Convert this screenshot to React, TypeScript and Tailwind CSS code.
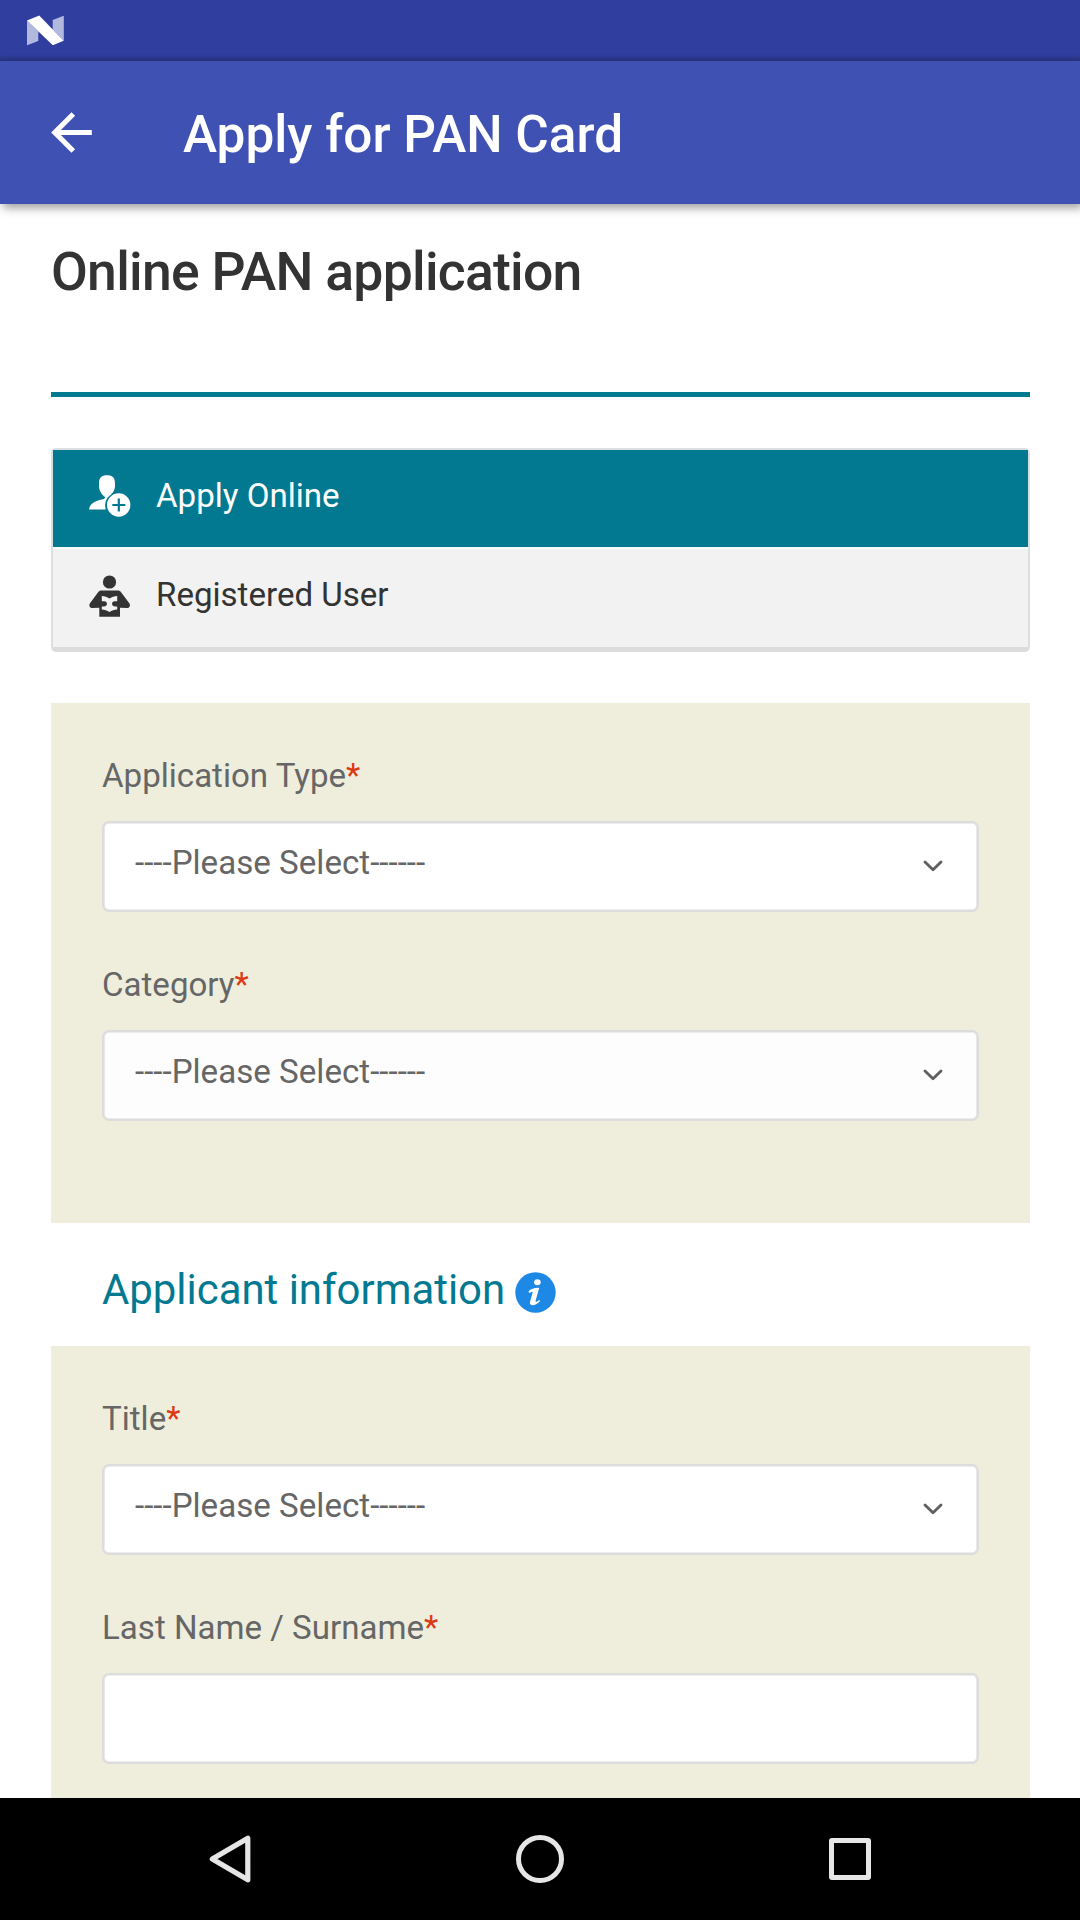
import React from "react";

function AndroidN() {
  return (
    <svg className="ml-[27px] mt-[15px] h-[31px] w-[37px] shrink-0" viewBox="0 0 37 31">
      <path d="M0 5.6 11.3 16.5V26L0 30.2Z" fill="#b3b8df" />
      <path d="M25.7 5 36.8 0.8V26L25.7 14.5Z" fill="#b3b8df" />
      <path d="M0 5.6 12.2 0.6 36.6 25.8 25.8 30.2Z" fill="#fff" />
    </svg>
  );
}

function StatusBar() {
  return (
    <div className="flex h-[61px] shrink-0 bg-linear-to-b from-[#303e9f] from-90% to-[#283480]">
      <AndroidN />
    </div>
  );
}

function AppBar() {
  return (
    <header className="relative z-10 flex h-[143px] shrink-0 items-center bg-[#3f51b3] pl-[41px] shadow-[3px_4px_9px_rgba(0,0,0,0.38)]">
      <svg className="h-[61px] w-[61px] shrink-0" viewBox="0 0 24 24" fill="#fff">
        <path d="M20 11H7.83l5.59-5.59L12 4l-8 8 8 8 1.41-1.41L7.83 13H20v-2z" />
      </svg>
      <h1 className="mt-[5px] ml-[81px] text-[51.3px] leading-[60px] font-medium text-white">
        Apply for PAN Card
      </h1>
    </header>
  );
}

function AddUserIcon() {
  return (
    <svg className="h-[42px] w-[42px]" viewBox="0 0 42 42" fill="#fff">
      <path d="M10 8.5C10 2.5 12.5.2 18 .2S26 2.5 26 8.5V11c0 3.5-1.6 6.5-4 8.6a14.2 14.2 0 0 0-5.4 14.9H.2c0-5 4.8-9 14.8-10.6l1.4-1.7C12.5 19.5 10 15.5 10 11Z" />
      <path
        fillRule="evenodd"
        d="M29.7 18.3a11.7 11.7 0 1 1 0 23.4 11.7 11.7 0 0 1 0-23.4ZM28.7 23.5v5.4h-5.4v2.2h5.4v5.4h2.2v-5.4h5.4v-2.2h-5.4v-5.4Z"
      />
    </svg>
  );
}

function ReaderIcon() {
  return (
    <svg className="h-[42px] w-[42px]" viewBox="0 0 42 42" fill="#333">
      <circle cx="20.5" cy="7" r="6.6" />
      <path
        fillRule="evenodd"
        d="M12.3 15.5h16.6c1.2 0 2.2.5 3 1.5l8.6 11.5c1 2 .3 4.3-2 4.500l-7.500-.2V41.700H10.300V32.800l-7.500.2C.5 32.800-.2 30.500.8 28.500L9.300 17c.8-1 1.800-1.500 3-1.500ZM12.800 21v5.300h2.600c3.400.2 3.400 4.900 0 5.200h-2.600V34.500c3 .2 5.200 1 7.700 2.500 2.500-1.500 4.700-2.300 7.700-2.500V31.500h-2.600c-3.400-.3-3.400-5 0-5.200h2.600V21c-3 .2-5.200 1-7.700 2.500-2.500-1.500-4.700-2.300-7.700-2.500Z"
      />
    </svg>
  );
}

function Tabs() {
  return (
    <nav className="mt-[51px] h-[204px] rounded-[5px] border-2 border-b-[5px] border-[#dcdfe1] border-b-[#dcdcdc] bg-[#f2f2f2] text-[33.1px] leading-[40px]">
      <div className="flex h-[97px] items-start bg-[#027991] pt-[25px] pl-[36px] text-white">
        <AddUserIcon />
        <span className="mt-px ml-[25px]">Apply Online</span>
      </div>
      <div className="flex h-[100px] items-start border-t-2 border-[#f8fbfc] pt-[26px] pl-[36px] text-[#333]">
        <ReaderIcon />
        <span className="ml-[25px]">Registered User</span>
      </div>
    </nav>
  );
}

function Label({ text }: { text: string }) {
  return (
    <div className="h-[40px] text-[33.1px] leading-[40px] text-[#666]">
      {text}
      <span className="text-[#db3b14]">*</span>
    </div>
  );
}

function Select({ label, muted = false }: { label: string; muted?: boolean }) {
  return (
    <div>
      <Label text={label} />
      <div
        className={`mt-[25px] flex h-[91px] justify-between rounded-[7px] border-2 border-[#dcdcdc] pr-[33px] pl-[31px] shadow-[inset_0_0_0_0.6px_#dcdcdc] ${muted ? "bg-[#fdfdfd]" : "bg-white"}`}
      >
        <span className="text-[33.15px] leading-[80px] text-[#666]">----Please Select------</span>
        <svg className="mt-[36px] h-[14px] w-[22px]" viewBox="0 0 22 14">
          <path
            d="M3 3 11 10.7 19 3"
            fill="none"
            stroke="#606060"
            strokeWidth="2.9"
            strokeLinecap="round"
            strokeLinejoin="round"
          />
        </svg>
      </div>
    </div>
  );
}

function InfoIcon() {
  return (
    <svg className="mt-[1px] h-[41px] w-[41px]" viewBox="0 0 41 41">
      <circle cx="20.5" cy="20.5" r="20.2" fill="#1e88e5" />
      <g fill="#fff">
        <ellipse cx="22.4" cy="10.3" rx="3.3" ry="3" />
        <path d="M13.4 19.2c2.6-2.2 6-3.6 9.6-3.5l1.2.4-3.6 12.6c-.3 1.2.7 1.4 1.6.8l2.1-1.5.9 1.1c-2.5 2.5-5 4.3-8 4.2-2.2-.2-2.6-1.7-2.1-3.7l2.4-8.6c.3-1.2-.2-1.5-1-1.1l-2.1 1Z" />
      </g>
    </svg>
  );
}

function NavBar() {
  return (
    <footer className="flex h-[122px] shrink-0 items-center bg-black pl-[206px]">
      <svg className="h-[50px] w-[48px]" viewBox="0 0 48 50">
        <path d="M41.8 4.2V45.8L6.3 25Z" fill="none" stroke="#e6e6e6" strokeWidth="5.2" strokeLinejoin="round" />
      </svg>
      <div className="ml-[262px] h-[48px] w-[48px] rounded-full border-[5.5px] border-[#e6e6e6]" />
      <div className="ml-[265px] h-[42px] w-[42px] rounded-[3px] border-[5px] border-[#e6e6e6]" />
    </footer>
  );
}

export default function App() {
  return (
    <div className="flex h-[1920px] w-[1080px] flex-col overflow-hidden bg-white font-['Roboto',sans-serif]">
      <StatusBar />
      <AppBar />
      <main className="min-h-0 flex-1 overflow-hidden px-[51px] [&>*]:w-[979px]">
        <h2 className="mt-[33px] h-[160px] border-b-[5px] border-[#027991] text-[53.5px] leading-[70px] font-medium tracking-[-0.75px] whitespace-nowrap text-[#333]">
          Online PAN application
        </h2>
        <Tabs />
        <section className="mt-[51px] flex h-[520px] flex-col gap-[53px] bg-[#efeedd] px-[51px] pt-[53px]">
          <Select label="Application Type" />
          <Select label="Category" muted />
        </section>
        <div className="flex h-[123px] items-start gap-[10px] pt-[48px] pl-[51px]">
          <h3 className="mt-[-6px] text-[41.9px] leading-[50px] text-[#027991]">Applicant information</h3>
          <InfoIcon />
        </div>
        <section className="flex h-[520px] flex-col gap-[53px] bg-[#efeedd] px-[51px] pt-[53px]">
          <Select label="Title" />
          <div>
            <Label text="Last Name / Surname" />
            <input
              aria-label="Last Name / Surname"
              className="mt-[25px] block h-[91px] w-full rounded-[7px] border-2 border-[#dcdcdc] bg-white shadow-[inset_0_0_0_0.6px_#dcdcdc]"
            />
          </div>
        </section>
      </main>
      <NavBar />
    </div>
  );
}
